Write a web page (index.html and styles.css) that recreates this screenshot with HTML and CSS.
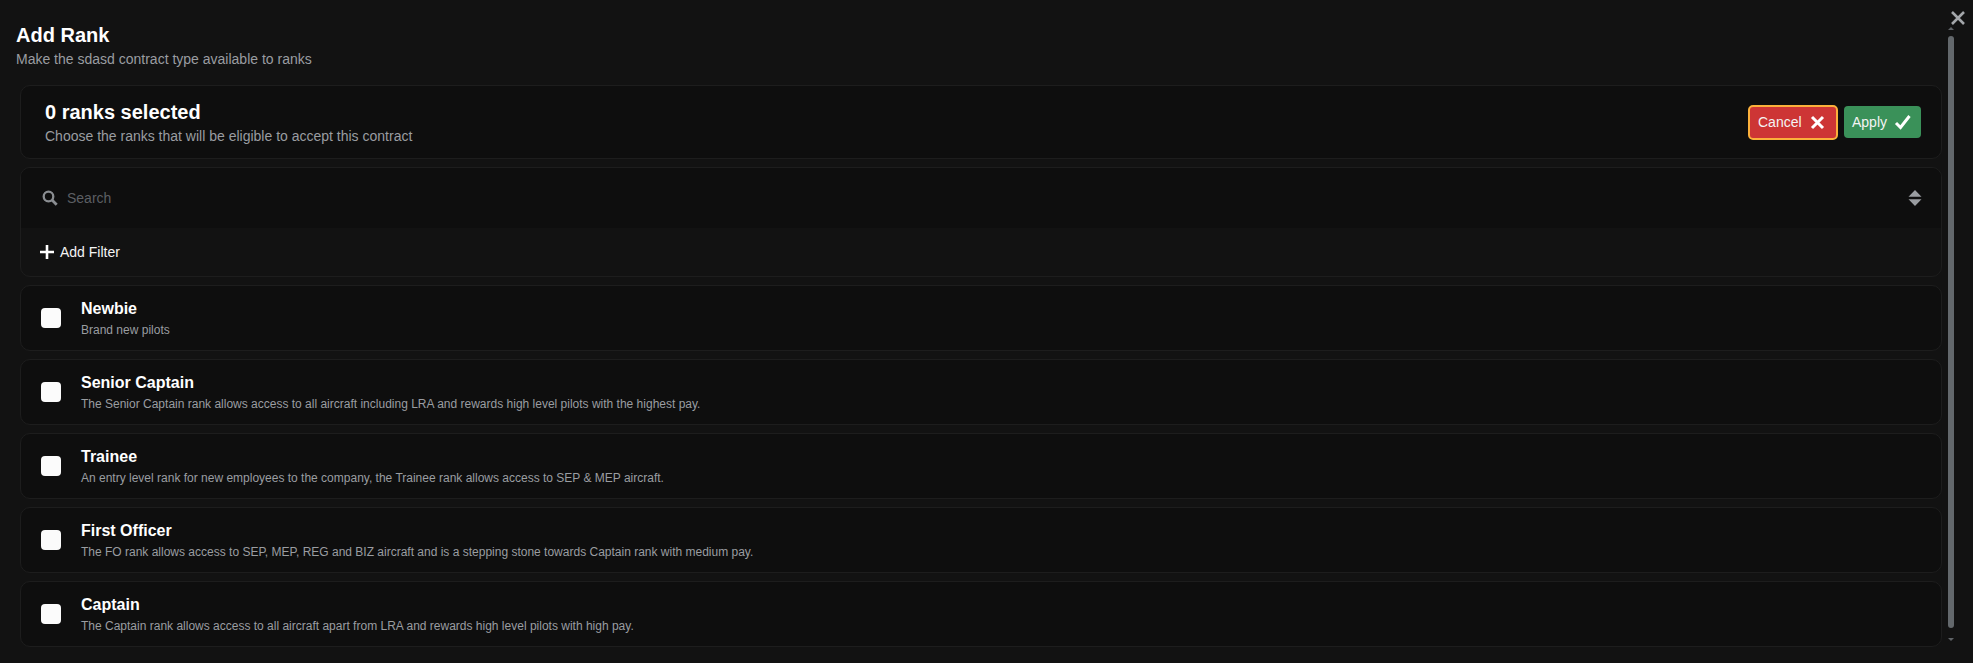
FILE: index.html
```html
<!DOCTYPE html>
<html lang="en">
<head>
  <meta charset="UTF-8" />
  <title>Add Rank</title>
  <link rel="stylesheet" href="styles.css">
</head>
<body>

  <div class="modal">
    <header class="modal-head">
      <h1>Add Rank</h1>
      <p>Make the sdasd contract type available to ranks</p>
    </header>

    <section class="card selected-bar">
      <div>
        <h2>0 ranks selected</h2>
        <p>Choose the ranks that will be eligible to accept this contract</p>
      </div>
      <div class="actions">
        <button class="btn btn-cancel">Cancel
          <svg width="15" height="15" viewBox="0 0 15 15"><path d="M2 2l11 11M13 2L2 13" stroke="#fff" stroke-width="3" fill="none"/></svg>
        </button>
        <button class="btn btn-apply">Apply
          <svg width="18" height="16" viewBox="0 0 18 16"><path d="M2 9l4.500 4.500L15.500 2" stroke="#fff" stroke-width="3" fill="none"/></svg>
        </button>
      </div>
    </section>

    <section class="card search-card">
      <div class="search-row">
        <svg class="search-icon" width="16" height="16" viewBox="0 0 16 16"><circle cx="6.500" cy="6.500" r="4.800" stroke="#8a8d91" stroke-width="2.300" fill="none"/><path d="M10 10l4.700 4.700" stroke="#8a8d91" stroke-width="2.800"/></svg>
        <span class="placeholder">Search</span>
        <svg class="sort-icon" width="14" height="16" viewBox="0 0 14 16"><path d="M7 0l6.500 6.800H.5zM7 16L.5 9.200h13z" fill="#9a9da1"/></svg>
      </div>
      <div class="filter-row">
        <svg width="14" height="14" viewBox="0 0 14 14"><path d="M7 0v14M0 7h14" stroke="#fff" stroke-width="2.600"/></svg>
        <span>Add Filter</span>
      </div>
    </section>

    <section class="card rank">
      <span class="check"></span>
      <div>
        <h3>Newbie</h3>
        <p>Brand new pilots</p>
      </div>
    </section>
    <section class="card rank">
      <span class="check"></span>
      <div>
        <h3>Senior Captain</h3>
        <p>The Senior Captain rank allows access to all aircraft including LRA and rewards high level pilots with the highest pay.</p>
      </div>
    </section>
    <section class="card rank">
      <span class="check"></span>
      <div>
        <h3>Trainee</h3>
        <p>An entry level rank for new employees to the company, the Trainee rank allows access to SEP &amp; MEP aircraft.</p>
      </div>
    </section>
    <section class="card rank">
      <span class="check"></span>
      <div>
        <h3>First Officer</h3>
        <p>The FO rank allows access to SEP, MEP, REG and BIZ aircraft and is a stepping stone towards Captain rank with medium pay.</p>
      </div>
    </section>
    <section class="card rank">
      <span class="check"></span>
      <div>
        <h3>Captain</h3>
        <p>The Captain rank allows access to all aircraft apart from LRA and rewards high level pilots with high pay.</p>
      </div>
    </section>
  </div>

  <!-- Cerrar y scrollbar -->
  <button class="close-btn" aria-label="Close">
    <svg width="14" height="14" viewBox="0 0 14 14"><path d="M1 1l12 12M13 1L1 13" stroke="#a3a6aa" stroke-width="2.600" fill="none"/></svg>
  </button>
  <div class="scroll">
    <span class="arrow-up"></span>
    <span class="thumb"></span>
    <span class="arrow-down"></span>
  </div>

</body>
</html>
```

FILE: styles.css
```css
* {
  box-sizing: border-box;
}
html,
body {
  height: 100%;
}
body {
  margin: 0;
  background: #121212;
  color: #fff;
  font-family: "Liberation Sans", Arial, sans-serif;
  overflow: hidden;
}
h1,
h2,
h3,
p {
  margin: 0;
}
.modal {
  padding: 0 31px 0 20px;
}
.modal-head {
  margin: 24px 0 18px -4px;
}
.modal-head h1 {
  font-size: 20px;
  line-height: 23px;
  font-weight: 700;
}
.modal-head p {
  margin-top: 4px;
  font-size: 14px;
  line-height: 16px;
  color: #9a9da1;
}

/* Cards */
.card {
  background: #0e0e0e;
  border: 1px solid #1d1d1d;
  border-radius: 10px;
  margin-bottom: 8px;
}
.selected-bar {
  height: 74px;
  display: flex;
  justify-content: space-between;
  align-items: center;
  padding: 0 20px 0 24px;
}
.selected-bar h2 {
  padding-top: 1px;
  font-size: 20px;
  line-height: 23px;
  font-weight: 700;
}
.selected-bar p {
  margin-top: 4px;
  font-size: 14px;
  line-height: 16px;
  color: #9a9da1;
}
.actions {
  display: flex;
  align-items: center;
  gap: 7px;
}
.btn {
  display: flex;
  align-items: center;
  justify-content: space-between;
  height: 32px;
  padding: 0 8px;
  border: none;
  border-radius: 4px;
  color: #f4f4f4;
  font-family: inherit;
  font-size: 14px;
}
.btn-cancel {
  width: 88px;
  height: 33px;
  padding: 0 12px 0 9px;
  background: #cd3535;
  outline: 2px solid #fbb03b;
  outline-offset: -1px;
}
.btn-apply {
  width: 77px;
  padding-right: 9px;
  background: #3a9159;
}

/* Search */
.search-card {
  height: 110px;
  overflow: hidden;
  background: #121212;
}
.search-row {
  height: 60px;
  background: #0e0e0e;
  display: flex;
  align-items: center;
  padding: 0 19px 0 21px;
}
.search-icon {
  margin-right: 9px;
}
.placeholder {
  font-size: 14px;
  color: #5c5f63;
}
.sort-icon {
  margin-left: auto;
}
.filter-row {
  display: flex;
  align-items: center;
  gap: 6px;
  height: 47px;
  padding: 0 19px;
  font-size: 14px;
  color: #f4f4f4;
}

/* Ranks */
.rank {
  height: 66px;
  display: flex;
  align-items: center;
  padding: 0 20px;
}
.check {
  width: 20px;
  height: 20px;
  flex: none;
  margin-right: 20px;
  background: #fbfbfb;
  border-radius: 4px;
}
.rank h3 {
  font-size: 16px;
  line-height: 18px;
  font-weight: 700;
}
.rank p {
  margin-top: 5px;
  font-size: 12px;
  line-height: 14px;
  color: #9a9da1;
}

/* Overlay */
.close-btn {
  position: absolute;
  top: 11px;
  right: 8px;
  padding: 0;
  background: none;
  border: none;
  line-height: 0;
}
.scroll {
  position: absolute;
  top: 27px;
  right: 19px;
  width: 6px;
  height: 616px;
  display: flex;
  flex-direction: column;
  align-items: center;
}
.arrow-up,
.arrow-down {
  width: 0;
  height: 0;
  border-left: 3px solid transparent;
  border-right: 3px solid transparent;
}
.arrow-up {
  border-bottom: 3px solid #5f6367;
}
.arrow-down {
  border-top: 3px solid #5f6367;
}
.thumb {
  width: 6px;
  height: 592px;
  margin: 6px 0 10px;
  background: #63686c;
  border-radius: 3px;
}
```
